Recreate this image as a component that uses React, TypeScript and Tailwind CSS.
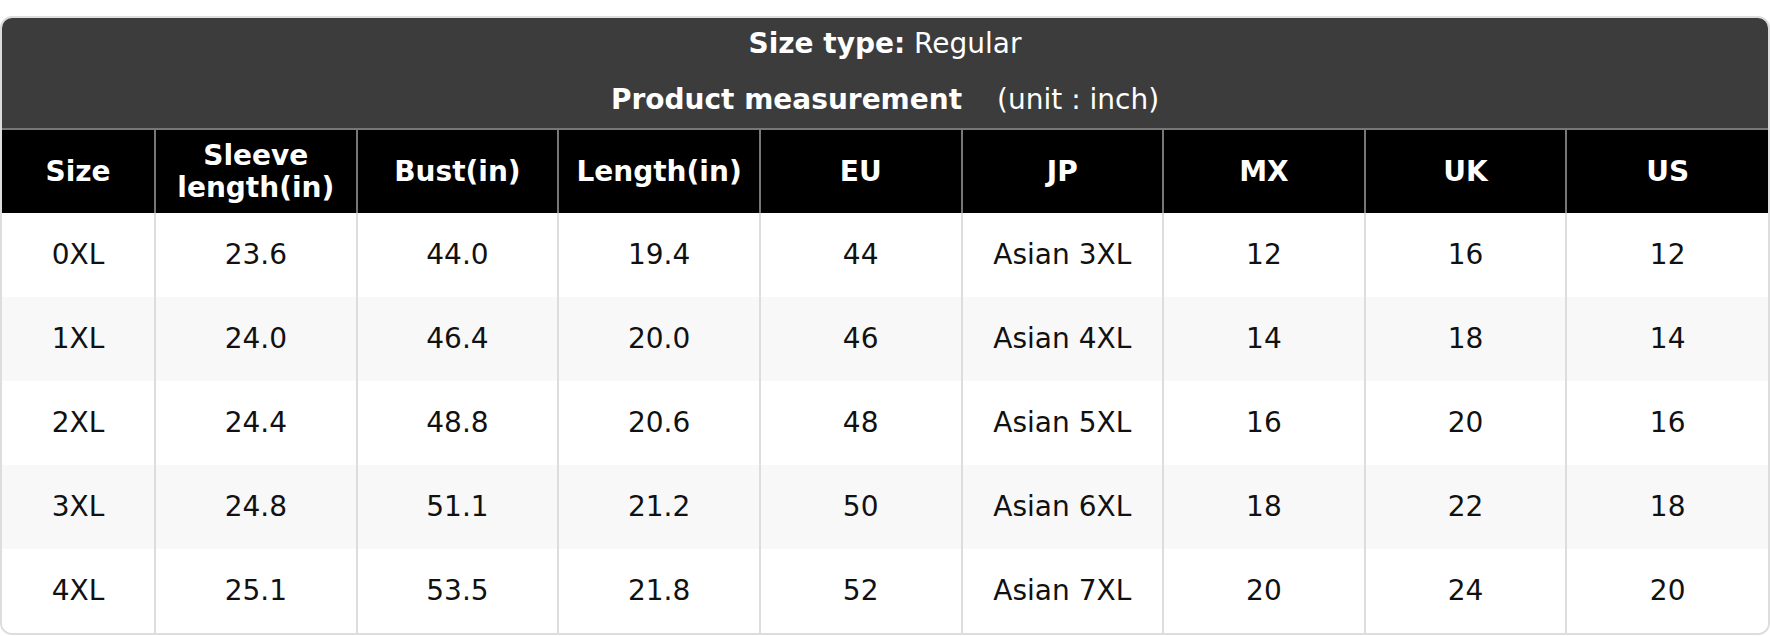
const headers = ["Size", "Sleeve length(in)", "Bust(in)", "Length(in)", "EU", "JP", "MX", "UK", "US"];

const rows = [
  ["0XL", "23.6", "44.0", "19.4", "44", "Asian 3XL", "12", "16", "12"],
  ["1XL", "24.0", "46.4", "20.0", "46", "Asian 4XL", "14", "18", "14"],
  ["2XL", "24.4", "48.8", "20.6", "48", "Asian 5XL", "16", "20", "16"],
  ["3XL", "24.8", "51.1", "21.2", "50", "Asian 6XL", "18", "22", "18"],
  ["4XL", "25.1", "53.5", "21.8", "52", "Asian 7XL", "20", "24", "20"],
];

export default function App() {
  return (
    <div className="bg-white pt-[16px] font-['DejaVu_Sans',sans-serif]">
      <div className="overflow-hidden rounded-[12px] border-2 border-[#dddddd]">
        {/* title block */}
        <div className="flex flex-col items-center gap-[24px] bg-[#3c3c3c] pt-[10px] pb-[12px] text-[28px] leading-[32px] text-white">
          <div>
            <span className="font-bold">Size type:</span> Regular
          </div>
          <div>
            <span className="font-bold">Product measurement</span>
            <span className="ml-[35px]">(unit : inch)</span>
          </div>
        </div>

        <table className="w-full table-fixed border-collapse text-center text-[28px]">
          <colgroup>
            <col className="w-[153px]" />
          </colgroup>
          <thead>
            <tr className="h-[84px] border-t-2 border-[#777777] bg-black text-white">
              {headers.map((h, i) => (
                <th
                  key={h}
                  className={`px-[12px] font-bold leading-[32px] ${i > 0 ? "border-l-2 border-[#777777]" : ""}`}
                >
                  {h}
                </th>
              ))}
            </tr>
          </thead>
          <tbody>
            {rows.map((row, r) => (
              <tr key={r} className={`h-[84px] ${r % 2 === 1 ? "bg-[#f8f8f8]" : "bg-white"}`}>
                {row.map((cell, i) => (
                  <td
                    key={i}
                    className={`text-[#111111] ${i > 0 ? "border-l-2 border-[#dddddd]" : ""}`}
                  >
                    {cell}
                  </td>
                ))}
              </tr>
            ))}
          </tbody>
        </table>
      </div>
    </div>
  );
}
